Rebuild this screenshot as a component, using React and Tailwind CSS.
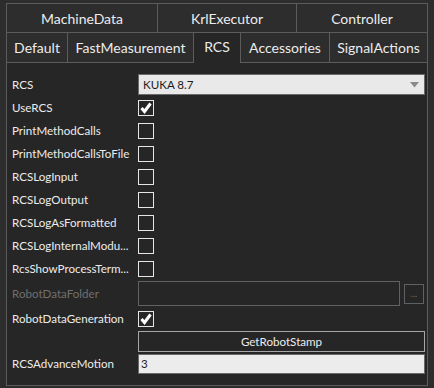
import React from 'react';

const font = { fontFamily: 'Lato, "Noto Sans", sans-serif' };

function Check({ checked }) {
    return (
        <div className="w-[16px] h-[16px] border border-[#e6e6e6] flex items-center justify-center">
            {checked && (
                <svg width="14" height="14" viewBox="0 0 14 14">
                    <path d="M2.5 7 L5.5 10.5 L11.5 2.5" fill="none" stroke="#ffffff" strokeWidth="3" />
                </svg>
            )}
        </div>
    );
}

function Row({ label, h, dim, children, align = 'items-center' }) {
    return (
        <div className={`flex ${align} ${h}`}>
            <div className={`w-[126px] shrink-0 self-center whitespace-nowrap overflow-hidden text-[11.6px] ${dim ? 'text-[#6f6f6f]' : 'text-[#ececec]'}`}>
                {label}
            </div>
            <div className="flex-1 flex items-center">{children}</div>
        </div>
    );
}

export default function App() {
    const topTabs = [
        { name: 'MachineData', w: 'w-[151px]' },
        { name: 'KrlExecutor', w: 'w-[139px]' },
        { name: 'Controller', w: 'flex-1 border-r' },
    ];
    const subTabs = [
        { name: 'Default', w: 'w-[61px]' },
        { name: 'FastMeasurement', w: 'w-[126px]' },
        { name: 'RCS', w: 'w-[47px]', active: true },
        { name: 'Accessories', w: 'w-[89px]' },
        { name: 'SignalActions', w: 'flex-1 border-r' },
    ];
    const checks = [
        ['UseRCS', true],
        ['PrintMethodCalls', false],
        ['PrintMethodCallsToFile', false],
        ['RCSLogInput', false],
        ['RCSLogOutput', false],
        ['RCSLogAsFormatted', false],
        ['RCSLogInternalModu...', false],
        ['RcsShowProcessTerm...', false],
    ];

    return (
        <div className="w-[434px] h-[388px] bg-[#2d2d2d] pt-[3px] pl-[6px]" style={font}>
            <div className="w-[422px] flex flex-col">
                <div className="flex h-[29px]">
                    {topTabs.map((t) => (
                        <div
                            key={t.name}
                            className={`${t.w} border-t border-l border-[#5c5c5c] flex items-center justify-center text-[14px] text-[#ececec]`}
                        >
                            {t.name}
                        </div>
                    ))}
                </div>
                <div className="flex h-[31px]">
                    {subTabs.map((t) => (
                        <div
                            key={t.name}
                            className={`${t.w} border-t border-l border-[#5c5c5c] flex items-center justify-center text-[14px] text-[#ececec] ${
                                t.active ? 'bg-[#262626] pb-[3px]' : 'border-b'
                            }`}
                        >
                            {t.name}
                        </div>
                    ))}
                </div>
                <div className="h-[323px] bg-[#262626] border-l border-r border-b border-[#5c5c5c] pt-[10px] pl-[5px] pr-[2px]">
                    <Row label="RCS" h="h-[23px]">
                        <div className="w-[287px] h-[21px] bg-[#e9e9e9] border border-[#6a6a6a] flex items-center justify-between pl-[4px] pr-[5px]">
                            <span className="text-[11.6px] text-[#1c1c1c]">KUKA 8.7</span>
                            <svg width="9" height="6" viewBox="0 0 9 6">
                                <path d="M0 0 L9 0 L4.5 5.5 Z" fill="#8a8a8a" />
                            </svg>
                        </div>
                    </Row>
                    {checks.map(([label, on]) => (
                        <Row key={label} label={label} h="h-[23px]">
                            <Check checked={on} />
                        </Row>
                    ))}
                    <Row label="RobotDataFolder" h="h-[27px]" dim>
                        <div className="w-[262px] h-[25px] border border-[#616161]" />
                        <div className="ml-[4px] w-[20px] h-[20px] border border-[#616161] flex items-center justify-center text-[9px] leading-none text-[#6f6f6f]">
                            ...
                        </div>
                    </Row>
                    <Row label="RobotDataGeneration" h="h-[24px]">
                        <Check checked />
                    </Row>
                    <Row label="" h="h-[22px]" align="items-start">
                        <div className="w-[287px] h-[21px] border border-[#a6a6a6] flex items-center justify-center text-[11.6px] text-[#ececec]">
                            GetRobotStamp
                        </div>
                    </Row>
                    <Row label="RCSAdvanceMotion" h="h-[22px]">
                        <div className="w-[287px] h-[20px] bg-[#ececec] border border-[#6a6a6a] flex items-center pl-[2px] text-[11.6px] text-[#1c1c1c]">
                            3
                        </div>
                    </Row>
                </div>
            </div>
        </div>
    );
}
